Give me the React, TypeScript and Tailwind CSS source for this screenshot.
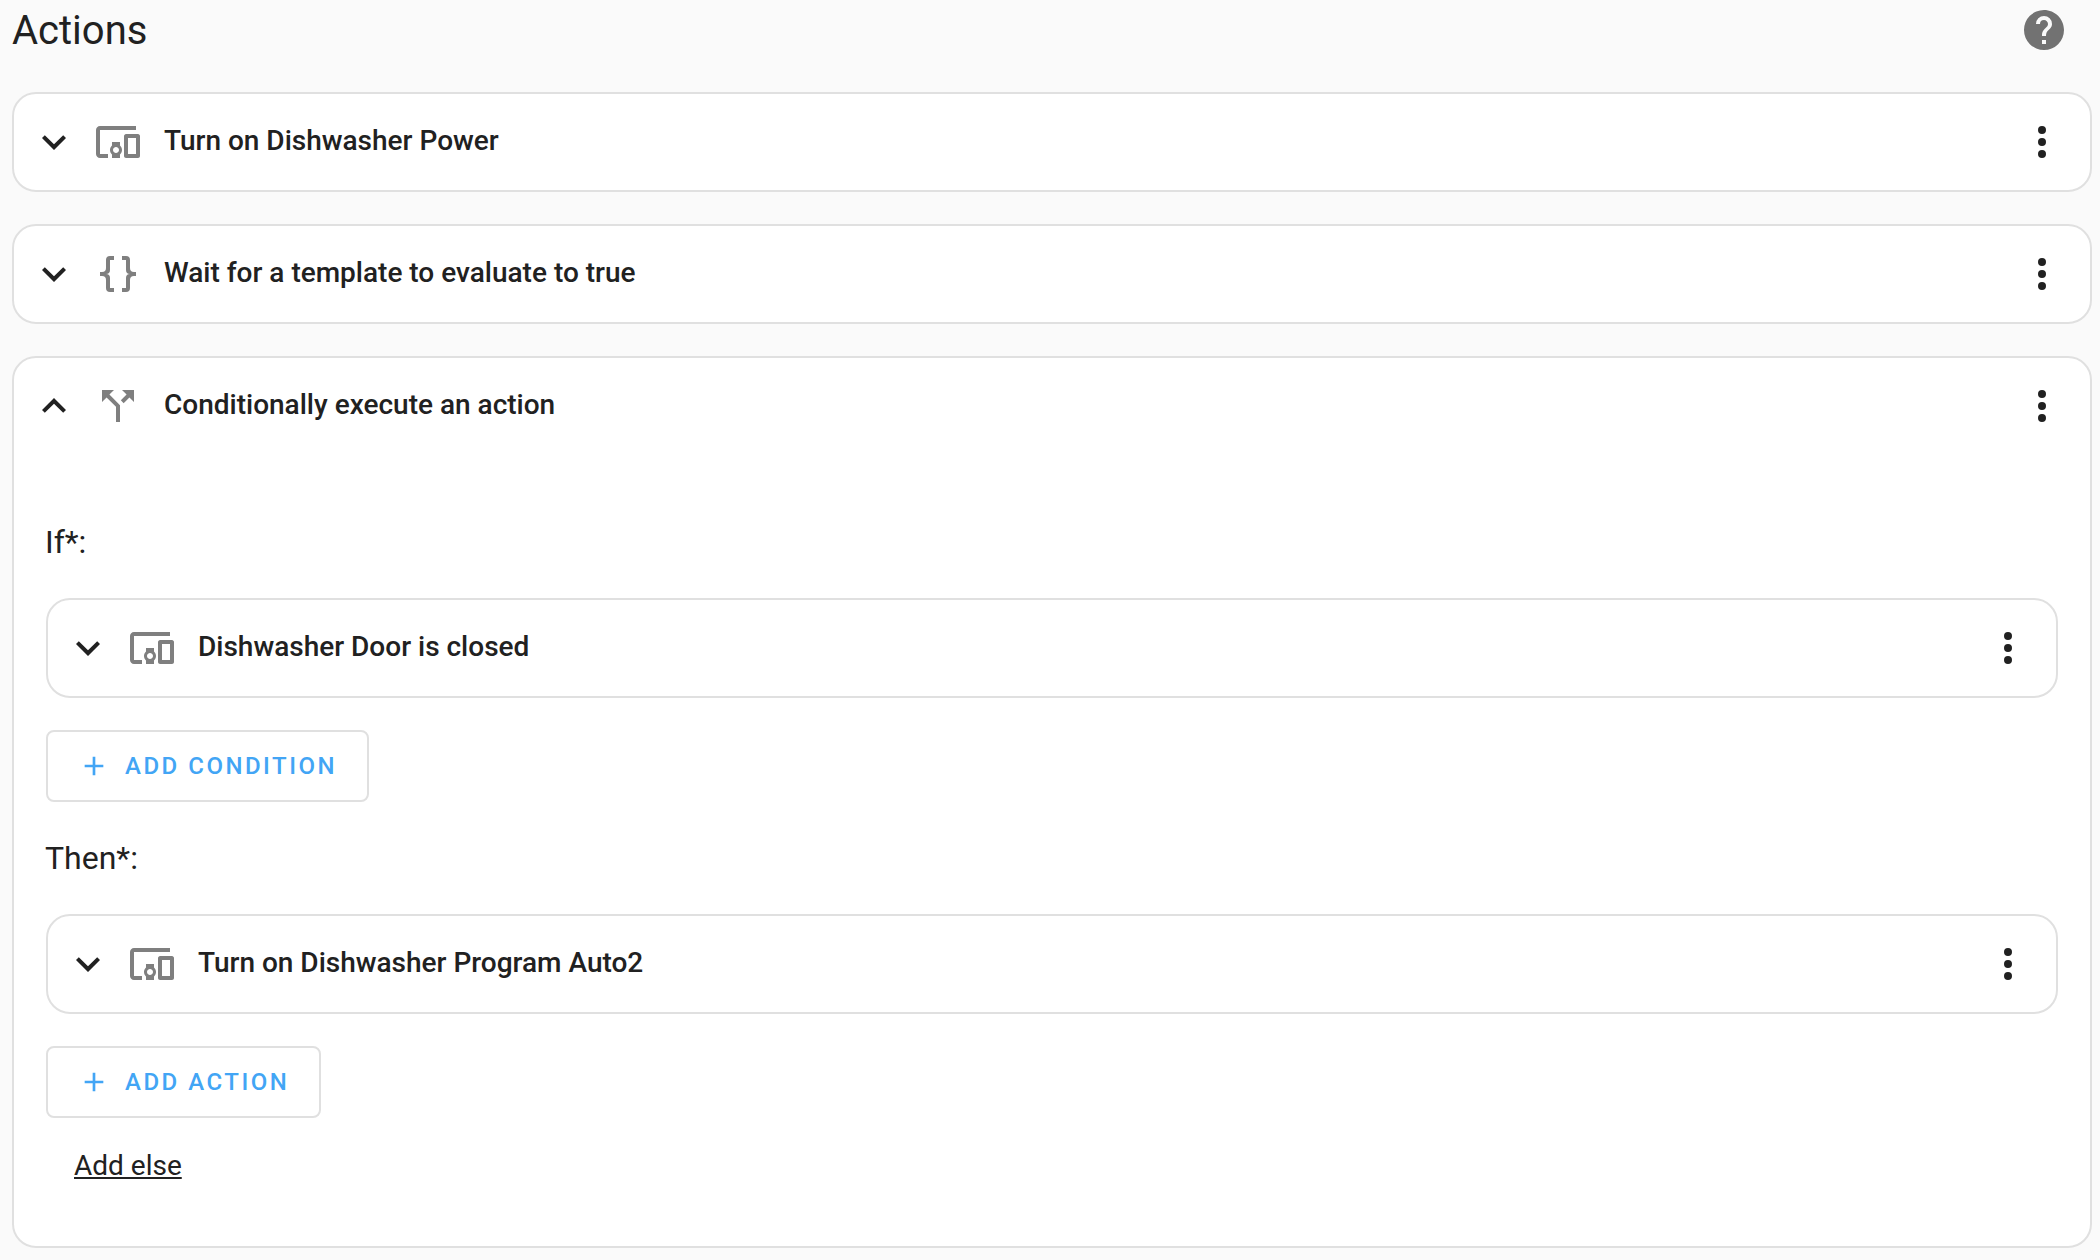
import type { ReactNode } from "react";

const ICONS = {
  devices:
    "M3 6H21V4H3C1.9 4 1 4.9 1 6V18C1 19.1 1.9 20 3 20H7V18H3V6M13 12H9V13.78C8.39 14.33 8 15.11 8 16C8 16.89 8.39 17.67 9 18.22V20H13V18.22C13.61 17.67 14 16.88 14 16S13.61 14.33 13 13.78V12M11 17.5C10.17 17.5 9.5 16.83 9.5 16S10.17 14.5 11 14.5 12.5 15.17 12.5 16 11.83 17.5 11 17.5M22 8H16C15.5 8 15 8.5 15 9V19C15 19.5 15.5 20 16 20H22C22.5 20 23 19.5 23 19V9C23 8.5 22.5 8 22 8M21 18H17V10H21V18Z",
  braces:
    "M8,3A2,2 0 0,0 6,5V9A2,2 0 0,1 4,11H3V13H4A2,2 0 0,1 6,15V19A2,2 0 0,0 8,21H10V19H8V14A2,2 0 0,0 6,12A2,2 0 0,0 8,10V5H10V3M16,3A2,2 0 0,1 18,5V9A2,2 0 0,0 20,11H21V13H20A2,2 0 0,0 18,15V19A2,2 0 0,1 16,21H14V19H16V14A2,2 0 0,1 18,12A2,2 0 0,1 16,10V5H14V3H16Z",
  split:
    "M14,4L16.29,6.29L13.41,9.17L14.83,10.59L17.71,7.71L20,10V4M10,4H4V10L6.29,7.71L11,12.41V20H13V11.59L7.71,6.29",
  down: "M7.41,8.58L12,13.17L16.59,8.58L18,10L12,16L6,10L7.41,8.58Z",
  up: "M7.41,15.41L12,10.83L16.59,15.41L18,14L12,8L6,14L7.41,15.41Z",
  dots: "M12,16A2,2 0 0,1 14,18A2,2 0 0,1 12,20A2,2 0 0,1 10,18A2,2 0 0,1 12,16M12,10A2,2 0 0,1 14,12A2,2 0 0,1 12,14A2,2 0 0,1 10,12A2,2 0 0,1 12,10M12,4A2,2 0 0,1 14,6A2,2 0 0,1 12,8A2,2 0 0,1 10,6A2,2 0 0,1 12,4Z",
  help: "M15.07,11.25L14.17,12.17C13.45,12.89 13,13.5 13,15H11V14.5C11,13.39 11.45,12.39 12.17,11.67L13.41,10.41C13.78,10.05 14,9.55 14,9C14,7.89 13.1,7 12,7A2,2 0 0,0 10,9H8A4,4 0 0,1 12,5A4,4 0 0,1 16,9C16,9.88 15.64,10.67 15.07,11.25M13,19H11V17H13M12,2A10,10 0 0,0 2,12A10,10 0 0,0 12,22A10,10 0 0,0 22,12C22,6.47 17.5,2 12,2Z",
  plus: "M19,13H13V19H11V13H5V11H11V5H13V11H19V13Z",
};

type IconName = keyof typeof ICONS;

function Icon({ name, className }: { name: IconName; className: string }) {
  return (
    <svg viewBox="0 0 24 24" fill="currentColor" className={`shrink-0 ${className}`}>
      <path d={ICONS[name]} />
    </svg>
  );
}

function RowHeader({ icon, title, open }: { icon: IconName; title: string; open?: boolean }) {
  return (
    <div className="flex h-[96px] items-center pl-[16px] pr-[24px]">
      <Icon name={open ? "up" : "down"} className="h-[48px] w-[48px] text-[#212121]" />
      <Icon name={icon} className="ml-[16px] h-[48px] w-[48px] text-[#7f7f7f]" />
      <span className="ml-[22px] flex-1 -translate-y-[1px] text-[28px] leading-[40px] font-medium text-[#212121]">
        {title}
      </span>
      <Icon name="dots" className="h-[48px] w-[48px] text-[#212121]" />
    </div>
  );
}

function Panel({ icon, title, open, children }: { icon: IconName; title: string; open?: boolean; children?: ReactNode }) {
  return (
    <div className="rounded-[24px] border-2 border-[#e0e0e0] bg-white">
      <RowHeader icon={icon} title={title} open={open} />
      {children}
    </div>
  );
}

function AddButton({ label }: { label: string }) {
  return (
    <button className="flex h-[72px] items-center self-start rounded-[8px] border-2 border-[#e0e0e0] px-[30px] text-[#42a5f5]">
      <Icon name="plus" className="h-[32px] w-[32px]" />
      <span className="ml-[15px] text-[24px] font-medium tracking-[2.5px]">{label}</span>
    </button>
  );
}

function Section({ label, icon, title, button }: { label: string; icon: IconName; title: string; button: string }) {
  return (
    <div className="flex flex-col">
      <div className="mb-[32px] -ml-[1px] flex h-[48px] items-center text-[32px] text-[#212121]">{label}</div>
      <Panel icon={icon} title={title} />
      <div className="mt-[32px] flex">
        <AddButton label={button} />
      </div>
    </div>
  );
}

export default function App() {
  return (
    <div className="h-[1260px] overflow-hidden bg-[#fafafa] pl-[12px] pr-[8px] font-['Roboto',sans-serif]">
      <div className="flex h-[60px] items-center justify-between">
        <h1 className="mt-[2px] text-[40px] leading-[60px] font-normal text-[#212121]">Actions</h1>
        <Icon name="help" className="mr-[24px] h-[48px] w-[48px] text-[#727272]" />
      </div>
      <div className="mt-[32px] flex flex-col gap-[32px]">
        <Panel icon="devices" title="Turn on Dishwasher Power" />
        <Panel icon="braces" title="Wait for a template to evaluate to true" />
        <Panel icon="split" title="Conditionally execute an action" open>
          <div className="flex flex-col gap-[32px] px-[32px] pt-[64px]">
            <Section label="If*:" icon="devices" title="Dishwasher Door is closed" button="ADD CONDITION" />
            <Section label="Then*:" icon="devices" title="Turn on Dishwasher Program Auto2" button="ADD ACTION" />
          </div>
          <div className="pl-[60px] pt-[28px] pb-[60px]">
            <a className="text-[28px] leading-[40px] text-[#212121] underline">Add else</a>
          </div>
        </Panel>
      </div>
    </div>
  );
}
